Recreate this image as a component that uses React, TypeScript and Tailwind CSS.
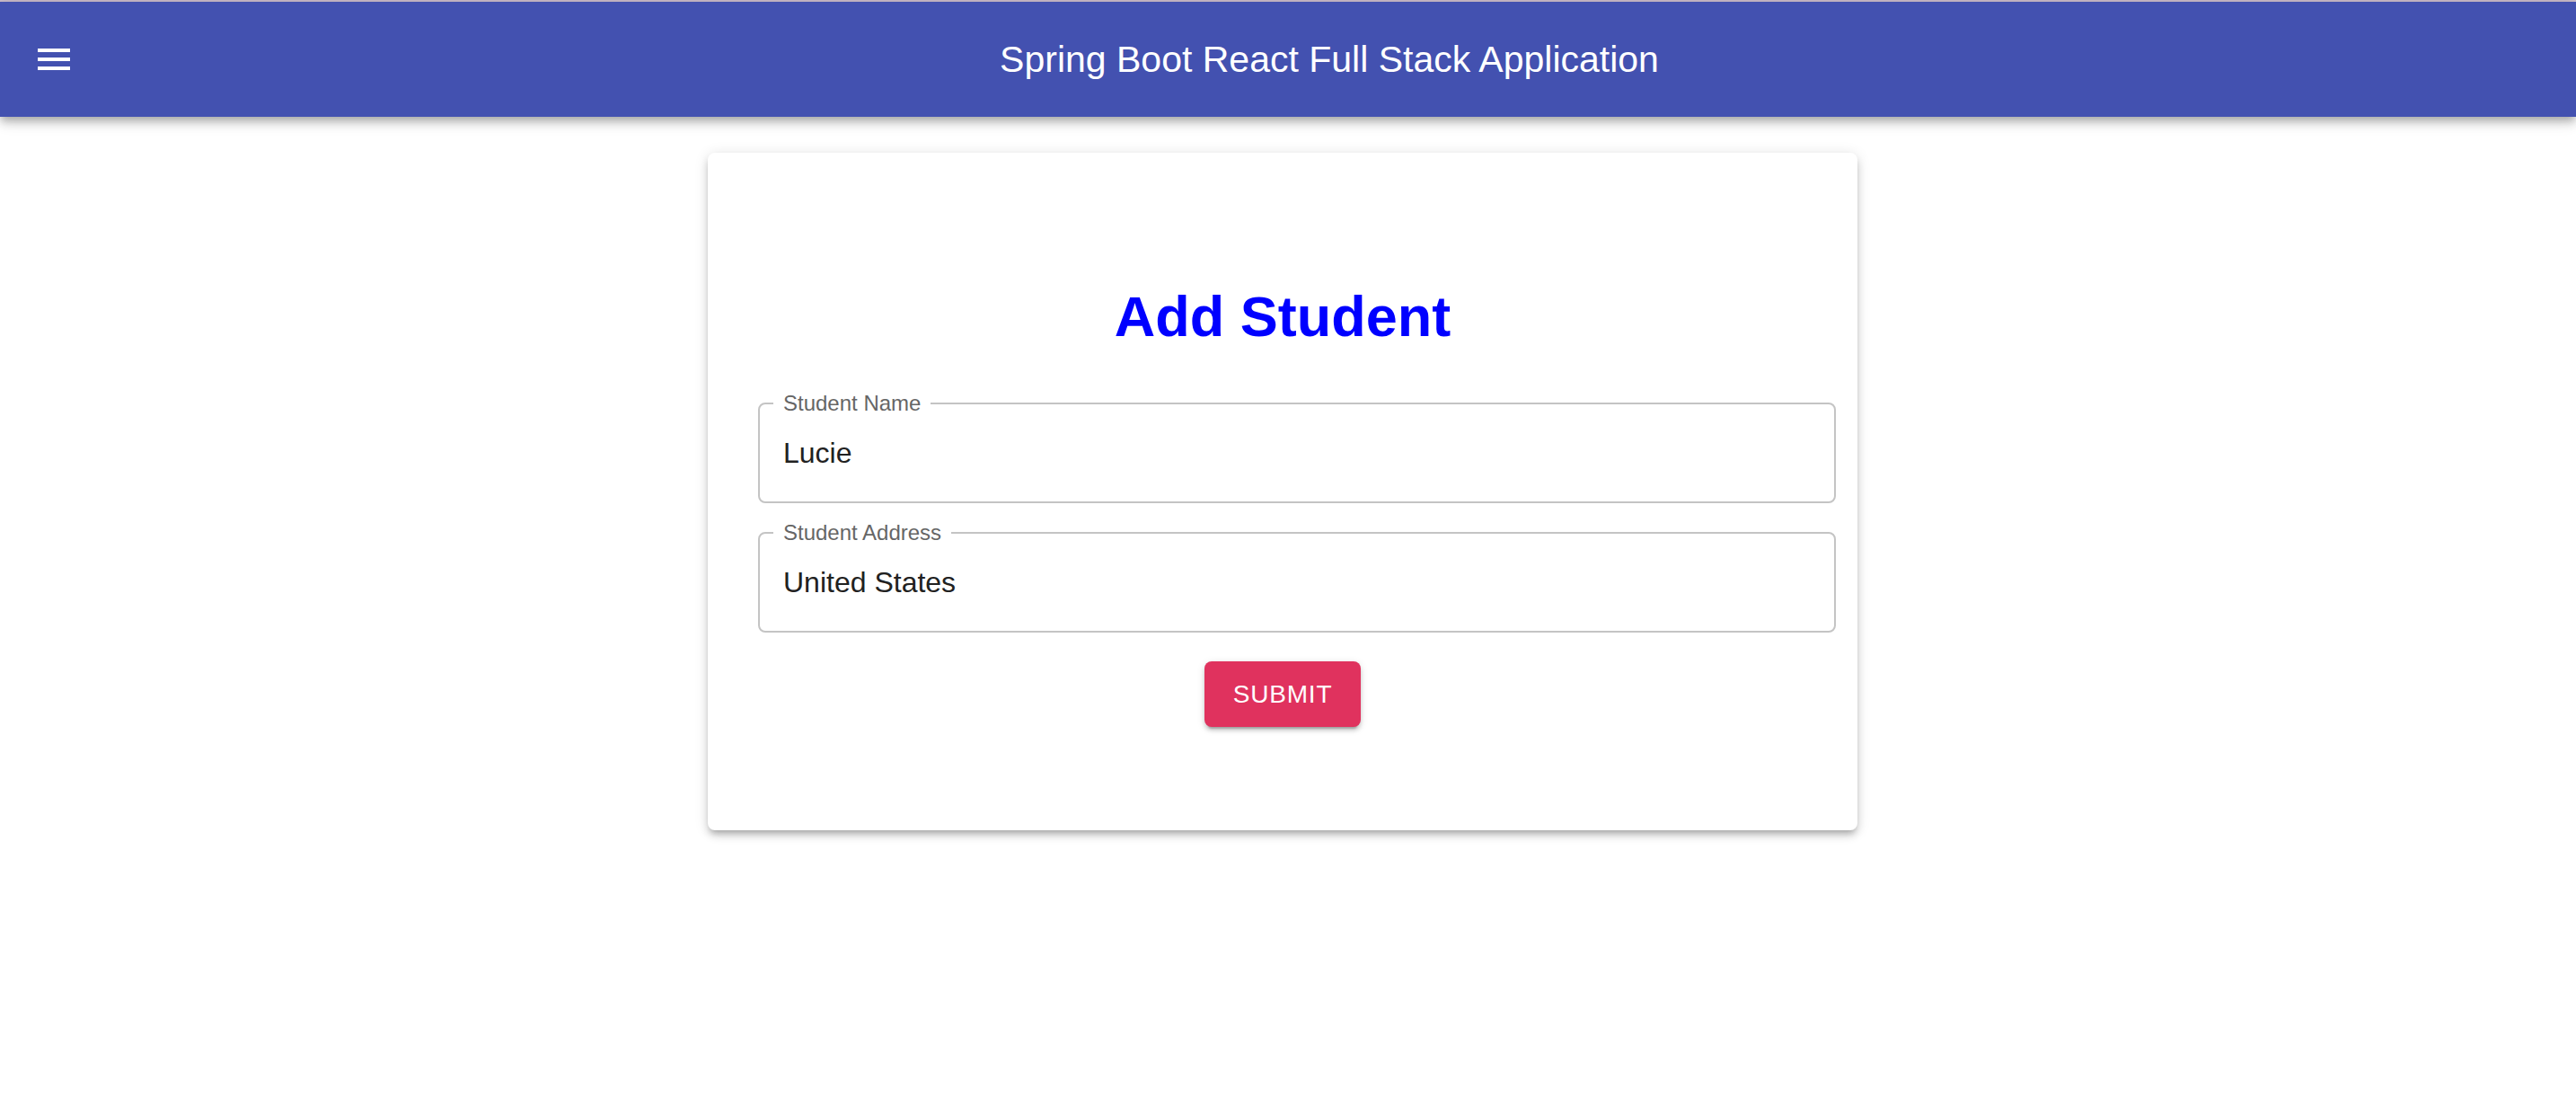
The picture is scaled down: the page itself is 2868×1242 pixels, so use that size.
import React from "react";

interface Field {
  label: string;
  value: string;
}

const fields: Field[] = [
  { label: "Student Name", value: "Lucie" },
  { label: "Student Address", value: "United States" },
];

const MenuIcon: React.FC = () => (
  <svg viewBox="0 0 24 24" className="w-[48px] h-[48px]" fill="#ffffff">
    <path d="M3 18h18v-2H3zm0-5h18v-2H3zm0-7v2h18V6H3z" />
  </svg>
);

const OutlinedField: React.FC<{ field: Field }> = ({ field }) => (
  <div className="relative w-[1200px] h-[112px] border-2 border-[#c4c4c4] rounded-[8px] flex items-center pl-[26px]">
    <span className="absolute left-[15px] top-[-13px] px-[11px] bg-white text-[24px] leading-[24px] text-[#666666]">
      {field.label}
    </span>
    <span className="text-[32px] leading-[32px] text-[#212121]">
      {field.value}
    </span>
  </div>
);

const App: React.FC = () => {
  return (
    <div
      className="min-h-screen bg-white"
      style={{ fontFamily: '"Liberation Sans", Arial, sans-serif' }}
    >
      {/* thin strip above the app bar */}
      <div className="h-[2px] bg-[#cbbccb]" />

      {/* App bar */}
      <header className="relative z-10 h-[128px] bg-[#4351b0] flex items-center pl-[36px] pr-[48px] shadow-[0_4px_8px_-2px_rgba(0,0,0,0.2),0_8px_10px_0_rgba(0,0,0,0.14),0_2px_20px_0_rgba(0,0,0,0.12)]">
        <button className="mr-[56px] flex items-center justify-center">
          <MenuIcon />
        </button>
        <h1 className="flex-1 text-center text-white text-[41px] leading-[48px] font-normal">
          Spring Boot React Full Stack Application
        </h1>
      </header>

      {/* Form card */}
      <div className="flex justify-center pr-[12px] pt-[40px]">
        <div className="w-[1280px] bg-white rounded-[8px] pt-[151px] pb-[115px] shadow-[0_6px_6px_-4px_rgba(0,0,0,0.2),0_6px_8px_0_rgba(0,0,0,0.14),0_2px_16px_0_rgba(0,0,0,0.12)]">
          <h2 className="text-center text-[#0000ff] text-[63px] leading-none font-bold">
            Add Student
          </h2>

          <div className="mt-[64px] pl-[56px] flex flex-col gap-[32px]">
            {fields.map((f) => (
              <OutlinedField key={f.label} field={f} />
            ))}
          </div>

          <div className="mt-[32px] flex justify-center">
            <button className="h-[73px] px-[32px] rounded-[8px] bg-[#e0325e] text-white text-[28px] tracking-[0.8px] shadow-[0_6px_2px_-4px_rgba(0,0,0,0.2),0_4px_4px_0_rgba(0,0,0,0.14),0_2px_10px_0_rgba(0,0,0,0.12)]">
              SUBMIT
            </button>
          </div>
        </div>
      </div>
    </div>
  );
};

export default App;
